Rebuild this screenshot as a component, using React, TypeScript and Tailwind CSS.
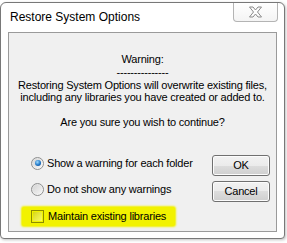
import React from "react";

const font = { fontFamily: '"Liberation Sans", Arial, sans-serif' };

const Radio = ({ checked }: { checked?: boolean }) => (
  <span className="flex h-[13px] w-[13px] items-center justify-center rounded-full border border-[#8e8f8f] bg-gradient-to-br from-[#dcdcdc] to-[#fbfbfb]">
    <span className="flex h-[9px] w-[9px] items-center justify-center rounded-full bg-gradient-to-br from-[#d5d5d5] to-[#f4f4f4]">
      {checked && (
        <span className="h-[6px] w-[6px] rounded-full bg-[radial-gradient(circle_at_40%_35%,#9fdcff,#1d75c7_55%,#0b3f85)]" />
      )}
    </span>
  </span>
);

const Btn = ({ label }: { label: string }) => (
  <button
    type="button"
    className="flex h-[21px] w-[58px] items-center justify-center rounded-[3px] border border-[#707070] bg-[linear-gradient(#f2f2f2_0%,#ebebeb_50%,#dddddd_50%,#cfcfcf_100%)] text-[11px] tracking-[-0.2px] text-black shadow-[inset_0_0_0_1px_#fcfcfc]"
  >
    {label}
  </button>
);

export default function App() {
  return (
    <div className="h-[243px] w-[287px] bg-white pt-[2px]" style={font}>
      <div className="flex h-[237px] w-[285px] flex-col rounded-t-[6px] rounded-b-[4px] border border-[#787878] bg-white px-[7px] pb-[6px] shadow-[1px_1px_3px_rgba(0,0,0,0.25)]">
        <div className="flex h-[29px] items-start justify-between">
          <span className="pl-[2px] pt-[7px] text-[12px] leading-[14px] text-black">
            Restore System Options
          </span>
          <div className="mr-[-1px] flex h-[19px] w-[45px] items-center justify-center rounded-b-[4px] border border-t-0 border-[#b4b4b4] bg-[linear-gradient(#ffffff,#f4f4f4)]">
            <svg width="15" height="12" viewBox="0 0 15 12">
              <path
                d="M1.5 1 L5 1 L7.5 4 L10 1 L13.5 1 L9.5 6 L13.5 11 L10 11 L7.5 8 L5 11 L1.5 11 L5.5 6 Z"
                fill="#fdfdfd"
                stroke="#8a8a8a"
                strokeWidth="1"
                strokeLinejoin="round"
              />
            </svg>
          </div>
        </div>
        <div className="flex flex-1 flex-col border border-[#9a9a9a] bg-[#f0f0f0] text-[11px] tracking-[-0.2px] text-black">
          <div className="flex flex-col items-center pt-[20px] text-center">
            <span className="leading-[13px]">Warning:</span>
            <span className="leading-[13px]">---------------</span>
            <span className="leading-[12px]">
              Restoring System Options will overwrite existing files,
            </span>
            <span className="leading-[12px]">
              including any libraries you have created or added to.
            </span>
            <span className="mt-[13px] leading-[12px]">Are you sure you wish to continue?</span>
          </div>
          <div className="mt-[27px] flex justify-between pl-[22px] pr-[6px]">
            <div className="flex flex-col">
              <div className="flex h-[16px] items-center gap-[3px]">
                <Radio checked />
                <span>Show a warning for each folder</span>
              </div>
              <div className="mt-[10px] flex h-[16px] items-center gap-[3px]">
                <Radio />
                <span>Do not show any warnings</span>
              </div>
              <div className="-ml-[9px] mt-[10px] flex h-[19px] w-fit items-center gap-[4px] rounded-[2px] bg-[#f2f200] pl-[9px] pr-[9px] shadow-[0_0_2px_1px_#f2f200]">
                <span className="flex h-[13px] w-[13px] items-center justify-center border border-[#8c8c00]">
                  <span className="h-[9px] w-[9px] bg-gradient-to-br from-[#d8d800] to-[#fafa60]" />
                </span>
                <span className="whitespace-nowrap">Maintain existing libraries</span>
              </div>
            </div>
            <div className="flex flex-col gap-[5px]">
              <Btn label="OK" />
              <Btn label="Cancel" />
            </div>
          </div>
        </div>
      </div>
    </div>
  );
}
